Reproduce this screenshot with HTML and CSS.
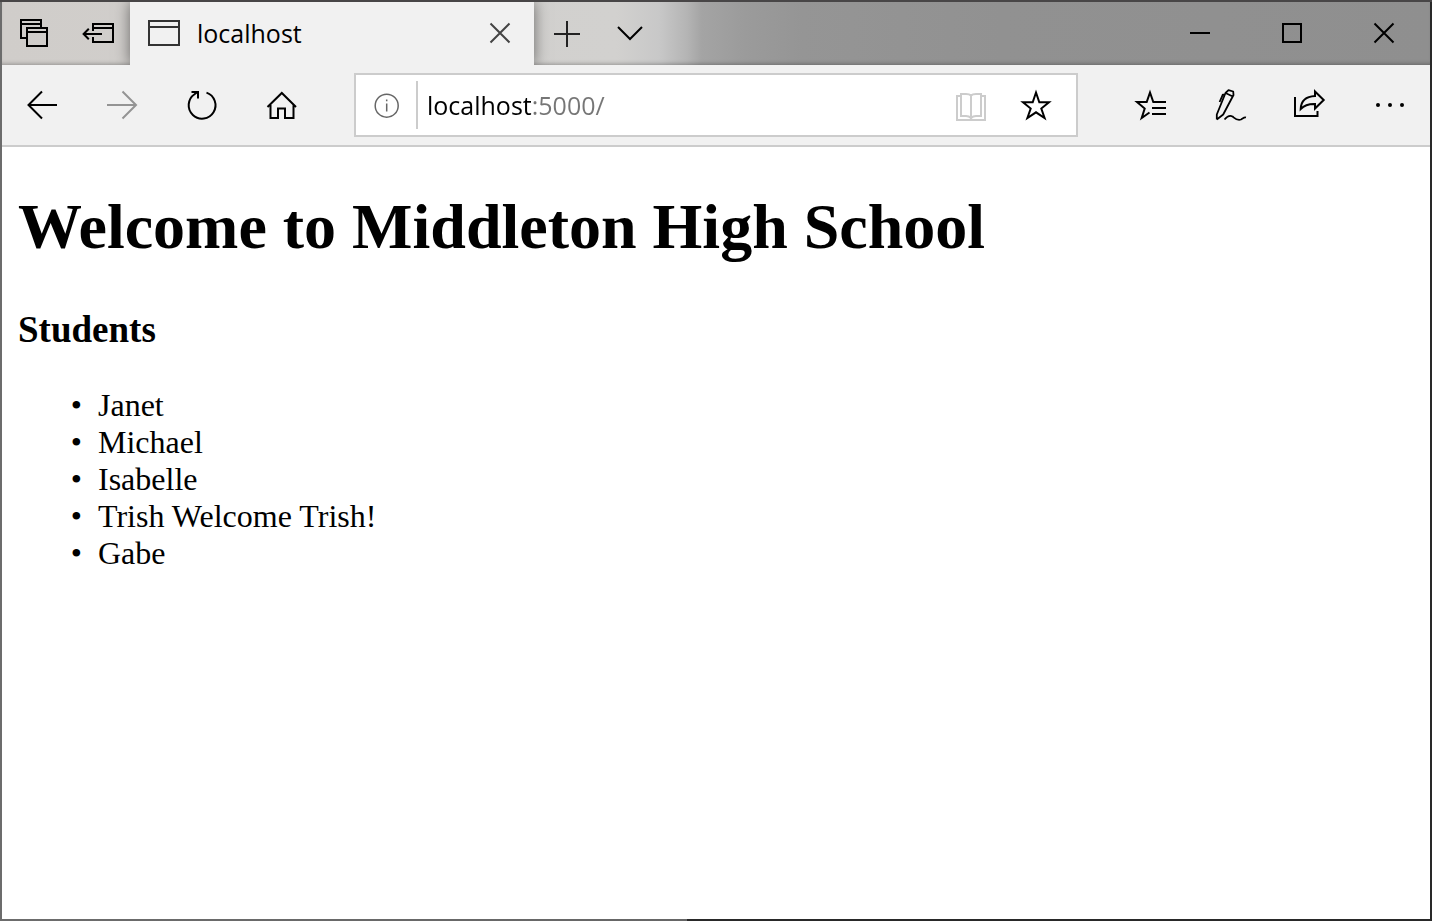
FILE: index.html
```html
<!DOCTYPE html>
<html lang="en">
<head>
<meta charset="utf-8">
<title>localhost</title>
<link rel="stylesheet" href="styles.css">
</head>
<body>
<div class="window">
  <header class="titlebar">
    <button class="title-btn" aria-label="Tabs you've set aside">
      <svg class="icon" viewBox="0 0 40 40"><path d="M12 25H7V7H27V14M7 11H27M13 15H33V33H13ZM13 19H33"/></svg>
    </button>
    <button class="title-btn" aria-label="Set these tabs aside">
      <svg class="icon" viewBox="0 0 40 40"><path d="M15 18V11H35V29H15V24M15 15H35M5.500 21H24M10.800 15.800L5.600 21L10.800 26.200"/></svg>
    </button>
    <div class="tab">
      <svg class="tab-icon" viewBox="0 0 32 26"><path d="M1 1H31V25H1ZM1 7H31"/></svg>
      <span class="tab-title">localhost</span>
      <button class="tab-close" aria-label="Close tab">
        <svg class="icon" viewBox="0 0 40 40"><path d="M10.500 10.500L29.500 29.500M29.500 10.500L10.500 29.500"/></svg>
      </button>
    </div>
    <button class="title-btn new-tab" aria-label="New tab">
      <svg class="icon" viewBox="0 0 40 40"><path d="M8 21H34M21 8V34"/></svg>
    </button>
    <button class="title-btn" aria-label="Show tab previews">
      <svg class="icon" viewBox="0 0 40 40"><path d="M8 14L20 26L32 14"/></svg>
    </button>
    <div class="window-controls">
      <button class="control-btn" aria-label="Minimize"><svg class="icon" viewBox="0 0 40 40"><path d="M10 20H30"/></svg></button>
      <button class="control-btn" aria-label="Maximize"><svg class="icon" viewBox="0 0 40 40"><path d="M11 11H29V29H11Z"/></svg></button>
      <button class="control-btn" aria-label="Close"><svg class="icon" viewBox="0 0 40 40"><path d="M10.500 10.500L29.500 29.500M29.500 10.500L10.500 29.500"/></svg></button>
    </div>
  </header>

  <nav class="toolbar" aria-label="Browser">
    <div class="tool-group">
      <button class="tool-btn" aria-label="Back"><svg class="icon" viewBox="0 0 40 40"><path d="M35 20H6.500M20 6.500L6.500 20L20 33.500"/></svg></button>
      <button class="tool-btn forward" aria-label="Forward" disabled><svg class="icon" viewBox="0 0 40 40"><path d="M5 20H34M20.500 6.500L34 20L20.500 33.500"/></svg></button>
      <button class="tool-btn" aria-label="Refresh"><svg class="icon" viewBox="0 0 40 40"><path d="M24.500 7.600A13.400 13.400 0 1 1 12.500 9.200L15.500 7M9.500 7H16V13.500"/></svg></button>
      <button class="tool-btn" aria-label="Home"><svg class="icon" viewBox="0 0 40 40"><path d="M5.500 22L19.800 8L34 22M8.500 20V33H16V23.500H23V33H31.500V20"/></svg></button>
    </div>
    <div class="address">
      <button class="site-info" aria-label="Site information"><svg class="icon" viewBox="0 0 40 40"><circle cx="20.700" cy="20.700" r="11.500"/><path d="M20.700 18.500V26.500M20.700 14.500V16.200"/></svg></button>
      <input class="url" type="text" aria-label="Address" value="localhost:5000/">
      <button class="address-btn reading" aria-label="Reading view" disabled><svg class="icon" viewBox="0 0 40 40"><path d="M9 11H5V35H33V11H29M19 10.500C17.500 9 16 9 14 9H9V31H14C16 31 17.500 31.500 19 33C20.500 31.500 22 31 24 31H29V9H24C22 9 20.500 9 19 10.500V34"/></svg></button>
      <button class="address-btn" aria-label="Add to favorites"><svg class="icon" viewBox="0 0 40 40"><path d="M20 7.500L23.300 17.200H33L25.300 23.500L28.600 33L20 27.300L11.400 33L14.700 23.500L7 17.200H16.700Z"/></svg></button>
    </div>
    <div class="tool-group">
      <button class="tool-btn" aria-label="Favorites hub"><svg class="icon" viewBox="0 0 40 40"><path d="M36 17H23.300L20 7.500L16.700 17H7L14.700 23.500L11.700 33L19.500 27.500M22 23H36M22 29H36"/></svg></button>
      <button class="tool-btn" aria-label="Add notes"><svg class="icon" viewBox="0 0 40 40"><path class="fine" d="M6.800 34.500V29.500L15.500 8L18.500 5.200L23.200 6.500L23.500 10L13.200 29.500L6.800 34.500M15.500 8L22.800 11.500M9.600 17L12.800 9.600H15M14.500 34.500C17 31.500 20 30 22.500 31.500C25 33.500 27 36 31 34.500C33 33.500 34 32 36 32.500"/></svg></button>
      <button class="tool-btn" aria-label="Share"><svg class="icon" viewBox="0 0 40 40"><path d="M5 12V31H27.500V26M25 6.500L33.700 15L25 23.500V19C18 18.800 14 20.500 10.700 24C11 16 16 11.500 25 11Z"/></svg></button>
      <button class="tool-btn" aria-label="Settings and more"><svg class="icon dots" viewBox="0 0 40 40"><circle cx="8" cy="20" r="2"/><circle cx="20" cy="20" r="2"/><circle cx="32" cy="20" r="2"/></svg></button>
    </div>
  </nav>

  <main class="page">
    <h1 class="page-title">Welcome to Middleton High School</h1>
    <h3 class="section-title">Students</h3>
    <ul class="students">
      <li>Janet</li>
      <li>Michael</li>
      <li>Isabelle</li>
      <li>Trish Welcome Trish!</li>
      <li>Gabe</li>
    </ul>
  </main>
</div>
</body>
</html>
```

FILE: styles.css
```css
* {
  box-sizing: border-box;
}

body {
  margin: 0;
  background: linear-gradient(to right, #6c6c6c 0, #666 48%, #292929 48%);
}

.window {
  display: flex;
  flex-direction: column;
  min-height: 100vh;
  padding: 0 2px 2px;
  border-top: 2px solid #484647;
}

button {
  display: flex;
  align-items: center;
  justify-content: center;
  padding: 0;
  border: 0;
  background: none;
  color: #000;
}

.icon {
  display: block;
  width: 40px;
  height: 40px;
  fill: none;
  stroke: currentColor;
  stroke-width: 2;
}

.icon .fine {
  stroke-width: 1.8;
  stroke-linejoin: round;
}

.icon.dots {
  fill: currentColor;
  stroke: none;
}

.titlebar {
  display: flex;
  height: 63px;
  overflow: hidden;
  background: linear-gradient(to right, #d0cdca 0, #d2d1cf 43%, #c8c8c8 46%, #b4b4b4 48%, #a4a4a4 49%, #9b9b9b 52%, #959595 56%, #919191 70%, #8f8f8f 100%);
  box-shadow: inset 0 -4px 4px -3px rgba(0, 0, 0, 0.3);
}

.title-btn,
.control-btn {
  padding-bottom: 1px;
}

.title-btn {
  flex: none;
  width: 64px;
}

.new-tab {
  color: #222;
}

.tab {
  display: flex;
  flex: 0 1 404px;
  align-items: center;
  padding: 0 14px 1px 18px;
  background: #f1f1f1;
  box-shadow: 0 0 14px rgba(0, 0, 0, 0.5);
}

.tab-icon {
  flex: none;
  width: 32px;
  height: 26px;
  fill: none;
  stroke: #333;
  stroke-width: 2;
}

.tab-title {
  flex: 1;
  padding-left: 17px;
  font: 25px/32px "Open Sans", "Noto Sans", sans-serif;
  color: #000;
}

.tab-close {
  color: #444;
}

.window-controls {
  display: flex;
  margin-left: auto;
}

.control-btn {
  width: 92px;
}

.toolbar {
  display: flex;
  align-items: center;
  gap: 32px;
  height: 82px;
  border-bottom: 2px solid #ccc;
  background: #f1f1f1;
}

.tool-group {
  display: flex;
  flex: none;
}

.tool-btn {
  width: 80px;
  height: 80px;
}

.forward {
  color: #949494;
}

.address {
  display: flex;
  flex: 1;
  align-items: center;
  min-width: 0;
  height: 64px;
  padding-right: 8px;
  border: 2px solid #ccc;
  background: #fff;
}

.site-info {
  flex: none;
  width: 62px;
  height: 48px;
  border-right: 2px solid #ccc;
  color: #666;
}

.site-info .icon {
  stroke-width: 1.5;
}

.url {
  flex: 1;
  min-width: 0;
  height: 48px;
  padding: 0 0 0 9px;
  border: 0;
  outline: 0;
  background: linear-gradient(to right, #000 114px, #767676 114px);
  background-clip: text;
  -webkit-background-clip: text;
  -webkit-text-fill-color: transparent;
  font: 25px/32px "Open Sans", "Noto Sans", sans-serif;
}

.address-btn {
  flex: none;
  width: 64px;
  height: 60px;
}

.reading {
  color: #ccc;
}

.page {
  flex: 1;
  padding: 43px 16px 32px;
  background: #fff;
  color: #000;
  font: 32px/37px "Liberation Serif", "Times New Roman", serif;
}

.page-title {
  margin: 0 0 44px;
  font-size: 64px;
  line-height: 74px;
}

.section-title {
  margin: 0 0 36px;
  font-size: 37px;
  line-height: 43px;
}

.students {
  margin: 0;
  padding-left: 80px;
  list-style-type: "•\00a0\00a0";
}
```
